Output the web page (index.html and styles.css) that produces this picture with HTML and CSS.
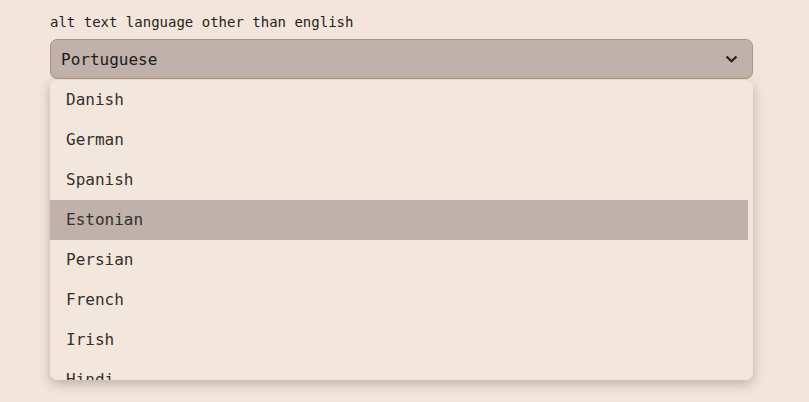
FILE: index.html
```html
<!DOCTYPE html>
<html>
<head>
<meta charset="utf-8">
<link rel="stylesheet" href="styles.css">
</head>
<body>
<div class="field">
  <label class="label">alt text language other than english</label>
  <div class="select-wrap">
    <div class="select">
      <span class="value">Portuguese</span>
      <svg class="chev" width="11" height="7" viewBox="0 0 11 7"><path d="M1.3 1.3 L5.5 5.3 L9.7 1.3" fill="none" stroke="#222" stroke-width="2.2" stroke-linecap="square"/></svg>
    </div>
    <div class="menu">
      <ul class="list">
        <li class="opt">Danish</li>
        <li class="opt">German</li>
        <li class="opt">Spanish</li>
        <li class="opt active">Estonian</li>
        <li class="opt">Persian</li>
        <li class="opt">French</li>
        <li class="opt">Irish</li>
        <li class="opt">Hindi</li>
      </ul>
    </div>
  </div>
</div>
</body>
</html>
```
FILE: styles.css
```css
html, body {
  margin: 0;
  padding: 0;
  background: #f3e5db;
  height: 100%;
}
body {
  font-family: "DejaVu Sans Mono", "Liberation Mono", monospace;
  color: #1e1a18;
}
.field {
  padding: 14px 56px 0 50px;
  display: flex;
  flex-direction: column;
}
.label {
  font-size: 14px;
  line-height: 16px;
  height: 16px;
  margin-bottom: 9px;
  color: #231f1d;
}
.select-wrap {
  position: relative;
}
.select {
  height: 40px;
  box-sizing: border-box;
  border: 1px solid #b39378;
  border-radius: 7px;
  background: #c0b2aa;
  display: flex;
  align-items: center;
  justify-content: space-between;
  padding: 0 15px 0 10px;
  font-size: 16px;
  color: #1e1a18;
}
.chev {
  display: block;
}
.menu {
  position: absolute;
  top: 41px;
  left: 0;
  right: 0;
  height: 300px;
  overflow: hidden;
  background: #f3e6dd;
  border-radius: 7px;
  box-shadow: 0 4px 12px rgba(60, 40, 30, 0.28);
  padding-right: 5px;
}
.list {
  list-style: none;
  margin: 0;
  padding: 0;
}
.opt {
  height: 40px;
  display: flex;
  align-items: center;
  padding-left: 16px;
  padding-bottom: 1px;
  box-sizing: border-box;
  font-size: 16px;
  color: #35302d;
}
.opt.active {
  background: #c0b2aa;
}
```
